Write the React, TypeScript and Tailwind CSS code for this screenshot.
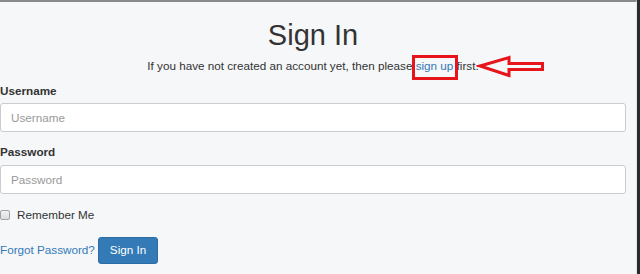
export default function App() {
  return (
    <div className="w-[640px] h-[274px] overflow-hidden bg-[#2b2b2b] font-['Liberation_Sans',Arial,sans-serif] text-[#333]">
      <div className="w-[637px] h-[274px] border-t-2 border-[#8a8a8a] bg-[#f6f7f9] border-r border-r-[#e4e6e9] flex">
        <div className="w-[626px] flex flex-col">
          {/* Header */}
          <h1 className="mt-[17px] text-center text-[29px] leading-[32px]">Sign In</h1>
          <p className="relative mt-[7px] text-center text-[11.7px] leading-[16.7px]">
            If you have not created an account yet, then please{' '}
            <span className="relative inline-block">
              <a href="#" className="text-[#337ab7]">sign up</a>
              <span className="absolute -top-[3px] -bottom-[5px] -left-[4px] -right-[5px] border-[3px] border-[#e8141c]" />
            </span>{' '}
            first.
            <svg
              className="absolute left-[476px] top-[-4px]"
              width="72"
              height="26"
              viewBox="0 0 72 26"
              fill="none"
            >
              <path d="M1 12 L4 12" stroke="#e8141c" strokeWidth="1" />
              <polygon
                points="4,12 33,3.5 33,9.5 66.5,9.5 66.5,15.5 33,15.5 33,21.5"
                stroke="#e8141c"
                strokeWidth="3"
                strokeLinejoin="miter"
              />
            </svg>
          </p>

          {/* Form */}
          <form className="mt-[8px] flex flex-col text-[11.7px] leading-[16.7px]">
            <label className="font-bold">Username</label>
            <input
              placeholder="Username"
              className="mt-[4px] h-[29px] w-full rounded-[3px] border border-[#ccc] bg-white px-[10px] placeholder:text-[#999] outline-none"
            />
            <label className="mt-[12px] font-bold">Password</label>
            <input
              type="password"
              placeholder="Password"
              className="mt-[4px] h-[29px] w-full rounded-[3px] border border-[#ccc] bg-white px-[10px] placeholder:text-[#999] outline-none"
            />
            <div className="mt-[13px] flex items-center gap-[7px]">
              <span className="h-[10px] w-[10px] rounded-[2px] border border-[#a3a3a3] bg-gradient-to-b from-[#f2f2f2] to-[#dcdcdc]" />
              <span>Remember Me</span>
            </div>
            <div className="mt-[13px] flex items-center gap-[3px]">
              <a href="#" className="text-[#337ab7]">Forgot Password?</a>
              <button
                type="button"
                className="h-[27px] rounded-[3px] border border-[#2e6da4] bg-[#337ab7] px-[11px] text-white"
              >
                Sign In
              </button>
            </div>
          </form>
        </div>
      </div>
    </div>
  );
}
